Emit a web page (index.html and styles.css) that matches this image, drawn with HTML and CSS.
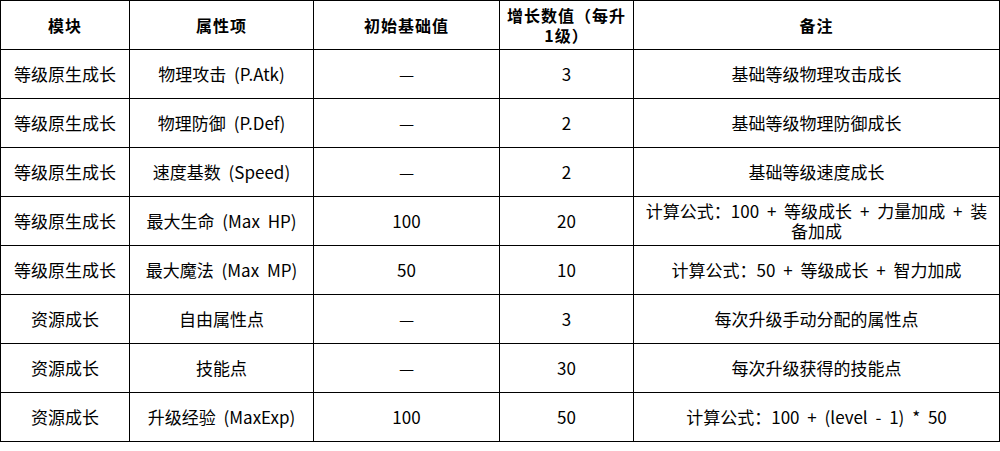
FILE: index.html
```html
<!DOCTYPE html>
<html lang="zh-CN">
<head>
<meta charset="utf-8">
<title>属性成长表</title>
<link rel="stylesheet" href="styles.css">
</head>
<body>
<table class="grid">
  <colgroup>
    <col class="c-module">
    <col class="c-attr">
    <col class="c-base">
    <col class="c-grow">
    <col class="c-note">
  </colgroup>
  <thead>
    <tr>
      <th>模块</th>
      <th>属性项</th>
      <th>初始基础值</th>
      <th>增长数值（每升1级）</th>
      <th>备注</th>
    </tr>
  </thead>
  <tbody>
    <tr><td>等级原生成长</td><td>物理攻击 (P.Atk)</td><td>—</td><td>3</td><td>基础等级物理攻击成长</td></tr>
    <tr><td>等级原生成长</td><td>物理防御 (P.Def)</td><td>—</td><td>2</td><td>基础等级物理防御成长</td></tr>
    <tr><td>等级原生成长</td><td>速度基数 (Speed)</td><td>—</td><td>2</td><td>基础等级速度成长</td></tr>
    <tr><td>等级原生成长</td><td>最大生命 (Max HP)</td><td>100</td><td>20</td><td>计算公式：100 + 等级成长 + 力量加成 + 装备加成</td></tr>
    <tr><td>等级原生成长</td><td>最大魔法 (Max MP)</td><td>50</td><td>10</td><td>计算公式：50 + 等级成长 + 智力加成</td></tr>
    <tr><td>资源成长</td><td>自由属性点</td><td>—</td><td>3</td><td>每次升级手动分配的属性点</td></tr>
    <tr><td>资源成长</td><td>技能点</td><td>—</td><td>30</td><td>每次升级获得的技能点</td></tr>
    <tr><td>资源成长</td><td>升级经验 (MaxExp)</td><td>100</td><td>50</td><td>计算公式：100 + (level - 1) * 50</td></tr>
  </tbody>
</table>
</body>
</html>
```
FILE: styles.css
```css
html, body {
  margin: 0;
  padding: 0;
  background: #fff;
}

.grid {
  border-collapse: collapse;
  table-layout: fixed;
  width: 999px;
  font-family: "Noto Sans CJK SC", "Noto Sans", sans-serif;
  font-size: 17px;
  line-height: 20px;
  color: #000;
}

.c-module { width: 129px; }
.c-attr { width: 184px; }
.c-base { width: 186px; }
.c-grow { width: 134px; }
.c-note { width: 366px; }

.grid th,
.grid td {
  border: 1px solid #000;
  height: 49px;
  padding: 0 4px;
  text-align: center;
  vertical-align: middle;
  box-sizing: border-box;
}

.grid td {
  word-spacing: 4px;
}

.grid td:last-child {
  padding: 0 8px;
}

.grid th {
  font-weight: bold;
  font-size: 16px;
  letter-spacing: 1px;
  padding: 0 4px;
}
```
